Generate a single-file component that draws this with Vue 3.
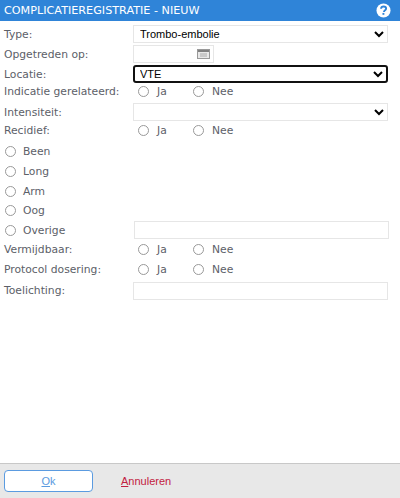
<template>
  <div class="dialog">
    <header class="title-bar">
      <span class="title">COMPLICATIEREGISTRATIE - NIEUW</span>
      <svg class="help" viewBox="0 0 16 16" width="15" height="15">
        <circle cx="8" cy="8" r="7.5" fill="#fff" />
        <path d="M5.4 6.2C5.5 4.6 6.6 3.7 8.1 3.7c1.6 0 2.7.9 2.7 2.2 0 1-.5 1.5-1.4 2.1-.7.5-.9.8-.9 1.5" fill="none" stroke="#2f84d8" stroke-width="2" />
        <rect x="6.9" y="10.6" width="2" height="2" fill="#2f84d8" />
      </svg>
    </header>

    <main class="form">
      <div class="row h-select">
        <label class="label">Type:</label>
        <select class="field wide"><option>Trombo-embolie</option></select>
      </div>
      <div class="row h-select">
        <label class="label">Opgetreden op:</label>
        <div class="field date">
          <svg viewBox="0 0 13 10" width="13" height="10">
            <rect x="0.5" y="0.5" width="12" height="9" fill="#e8e8e8" stroke="#999" />
            <rect x="1" y="1" width="11" height="2" fill="#808080" />
            <path d="M3 5h7M3 7h7" stroke="#aaa" stroke-width="1" />
          </svg>
        </div>
      </div>
      <div class="row h-select">
        <label class="label">Locatie:</label>
        <select class="field wide focused"><option>VTE</option></select>
      </div>
      <div class="row indicatie">
        <label class="label">Indicatie gerelateerd:</label>
        <label class="choice ja"><input type="radio" name="indicatie" /><span>Ja</span></label>
        <label class="choice"><input type="radio" name="indicatie" /><span>Nee</span></label>
      </div>
      <div class="row h-select gap-top">
        <label class="label">Intensiteit:</label>
        <select class="field wide"><option></option></select>
      </div>
      <div class="row recidief">
        <label class="label">Recidief:</label>
        <label class="choice ja"><input type="radio" name="recidief" /><span>Ja</span></label>
        <label class="choice"><input type="radio" name="recidief" /><span>Nee</span></label>
      </div>
      <div class="sites">
        <label v-for="s in sites" :key="s" class="choice site">
          <input type="radio" name="site" /><span>{{ s }}</span>
        </label>
      </div>
      <div class="row overige">
        <label class="choice site"><input type="radio" name="site" /><span>Overige</span></label>
        <input class="field other" type="text" />
      </div>
      <div v-for="q in ['Vermijdbaar:', 'Protocol dosering:']" :key="q" class="row h-select">
        <label class="label">{{ q }}</label>
        <label class="choice ja"><input type="radio" :name="q" /><span>Ja</span></label>
        <label class="choice"><input type="radio" :name="q" /><span>Nee</span></label>
      </div>
      <div class="row h-select toelichting">
        <label class="label">Toelichting:</label>
        <input class="field note" type="text" />
      </div>
    </main>

    <footer class="footer">
      <button class="ok"><u>O</u>k</button>
      <a class="cancel"><u>A</u>nnuleren</a>
    </footer>
  </div>
</template>

<script setup>
const sites = ['Been', 'Long', 'Arm', 'Oog'];
</script>

<style>
html, body { margin: 0; background: #fff; }
</style>

<style scoped>
.dialog {
  width: 400px;
  height: 498px;
  display: flex;
  flex-direction: column;
  font-family: "DejaVu Sans", Verdana, sans-serif;
  font-size: 10.75px;
  color: #5c6068;
}

.title-bar {
  height: 21px;
  background: #2f84d8;
  display: flex;
  align-items: center;
  justify-content: space-between;
  padding: 0 9px 0 4px;
  color: #fff;
  flex: none;
}

.title { font-size: 11.2px; }

.form {
  flex: 1;
  padding: 3px 12px 0 4px;
}

.row {
  display: flex;
  align-items: center;
}

.label { width: 129px; flex: none; }

.h-select { height: 20px; }
.indicatie { height: 14px; }
.gap-top { margin-top: 4px; }
.recidief { height: 16px; }
.toelichting { margin-top: 1px; }

.field {
  box-sizing: border-box;
  height: 18px;
  border: 1px solid #e6e6e6;
  background: #fff;
  font-family: "Liberation Sans", Arial, sans-serif;
  font-size: 11px;
  color: #000;
  padding: 0 0 0 2px;
  outline: none;
}

.wide { width: 255px; }

.focused {
  border: 2px solid #111;
  border-radius: 3px;
  padding-left: 1px;
}

.date {
  width: 81px;
  display: flex;
  align-items: center;
  justify-content: flex-end;
  padding-right: 3px;
}

.choice {
  display: flex;
  align-items: center;
}

.choice input {
  appearance: none;
  box-sizing: border-box;
  width: 11px;
  height: 11px;
  margin: 0;
  border: 1px solid #999;
  border-radius: 50%;
  background: #fff;
}

.choice span { margin-left: 8px; }

.ja { width: 55px; margin-left: 5px; }

.sites { display: flex; flex-direction: column; margin-top: 4px; }

.site { height: 19.7px; margin-left: 1px; }
.site span { margin-left: 7px; }

.overige { justify-content: space-between; height: 19px; }

.other { width: 255px; margin-right: -1px; }
.note { width: 255px; }

.footer {
  flex: none;
  box-sizing: border-box;
  height: 35px;
  border-top: 1px solid #c8c8c8;
  background: #e8e8e8;
  display: flex;
  align-items: center;
  padding: 0 0 0 4px;
  font-family: "Liberation Sans", Arial, sans-serif;
  font-size: 11px;
}

.ok {
  width: 89px;
  height: 22px;
  box-sizing: border-box;
  background: #fff;
  border: 1px solid #5b9be0;
  border-radius: 4px;
  color: #5b9be0;
  font: inherit;
  padding: 0;
}

.cancel {
  margin-left: 28px;
  color: #c2213f;
}
</style>
